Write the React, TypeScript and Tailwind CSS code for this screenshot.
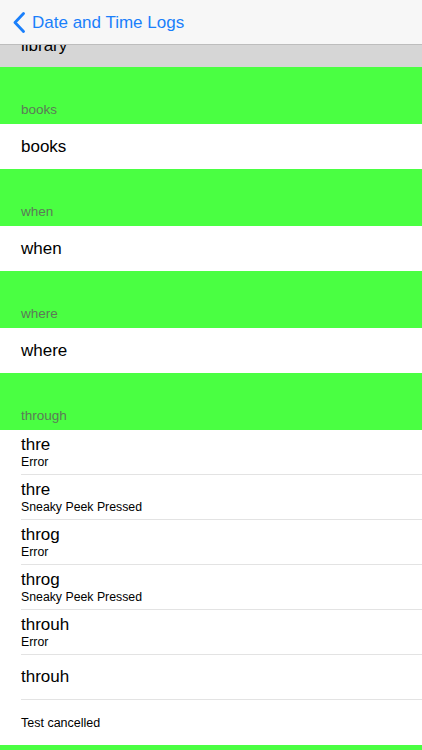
import React from 'react';

type Row = { title: string; subtitle?: string; small?: boolean };

const simpleSections: string[] = ['books', 'when', 'where'];

const throughRows: Row[] = [
  { title: 'thre', subtitle: 'Error' },
  { title: 'thre', subtitle: 'Sneaky Peek Pressed' },
  { title: 'throg', subtitle: 'Error' },
  { title: 'throg', subtitle: 'Sneaky Peek Pressed' },
  { title: 'throuh', subtitle: 'Error' },
  { title: 'throuh' },
  { title: 'Test cancelled', small: true },
];

// 绿色分组头
const SectionHeader: React.FC<{ label: string }> = ({ label }) => (
  <div className="h-[57px] shrink-0 bg-[#4aff42] flex items-end px-[21px] pb-[6px]">
    <span className="text-[13.5px] leading-[16px] text-[#5c7a58]">{label}</span>
  </div>
);

const LogRow: React.FC<{ row: Row; last?: boolean }> = ({ row, last }) => (
  <div className="shrink-0 bg-white pl-[21px]">
    <div className={`h-[45px] flex flex-col justify-center ${last ? '' : 'border-b border-[#e3e3e3]'}`}>
      {row.small ? (
        <span className="text-[12.5px] leading-[15px] text-black pt-[2px]">{row.title}</span>
      ) : (
        <>
          <span className="text-[17px] leading-[20px] text-black">{row.title}</span>
          {row.subtitle && <span className="text-[12.3px] leading-[14px] text-black">{row.subtitle}</span>}
        </>
      )}
    </div>
  </div>
);

export default function App() {
  return (
    <div className="w-[422px] h-[750px] overflow-hidden bg-white flex flex-col" style={{ fontFamily: '"Liberation Sans", Arial, sans-serif' }}>
      {/* 顶部导航 */}
      <div className="h-[45px] shrink-0 bg-[#f7f7f7] border-b border-[#bdbdbd] flex items-center pl-[13px] pt-[1px]">
        <svg width="12" height="21" viewBox="0 0 12 21" className="shrink-0">
          <path d="M10.5 1.5 L2 10.5 L10.5 19.5" fill="none" stroke="#1a7ffb" strokeWidth="2.8" strokeLinecap="round" strokeLinejoin="round" />
        </svg>
        <span className="ml-[7px] text-[17px] text-[#1a7ffb]">Date and Time Logs</span>
      </div>

      {/* 被遮住一半的选中行 */}
      <div className="h-[22px] shrink-0 bg-[#d6d6d6] overflow-hidden pl-[21px]">
        <div className="-mt-[22px] h-[45px] flex items-center">
          <span className="text-[17px] leading-[20px] text-black">library</span>
        </div>
      </div>

      {simpleSections.map((s) => (
        <React.Fragment key={s}>
          <SectionHeader label={s} />
          <LogRow row={{ title: s }} last />
        </React.Fragment>
      ))}

      <SectionHeader label="through" />
      {throughRows.map((r, i) => (
        <LogRow key={i} row={r} last={i === throughRows.length - 1} />
      ))}
      <div className="h-[57px] shrink-0 bg-[#4aff42]" />
    </div>
  );
}
